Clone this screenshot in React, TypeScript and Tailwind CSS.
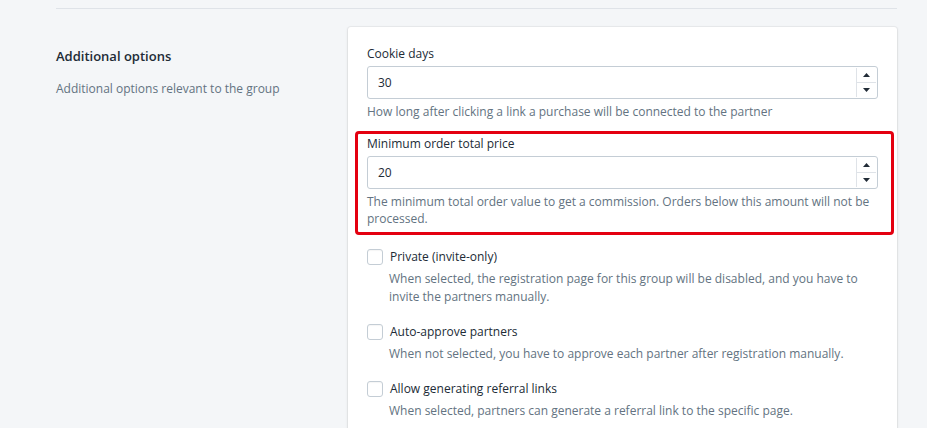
import React from "react";

function NumberField({ label, value, help }: { label: string; value: string; help: string }) {
  return (
    <div className="flex flex-col">
      <label className="text-[12px] leading-[18px] text-[#212b36] mb-[3px]">{label}</label>
      <div className="flex h-[33px] rounded-[3px] border border-[#c4cdd5] bg-white">
        <div className="flex-1 flex items-center pl-[10px] text-[12px] text-[#212b36]">{value}</div>
        <div className="w-[20px] flex flex-col border-l border-[#dfe3e8] my-[1px] mr-[1px]">
          <div className="flex-1 flex items-center justify-center border-b border-[#dfe3e8]">
            <svg width="7" height="4" viewBox="0 0 7 4"><path d="M3.5 0 L7 4 L0 4 Z" fill="#212b36" /></svg>
          </div>
          <div className="flex-1 flex items-center justify-center">
            <svg width="7" height="4" viewBox="0 0 7 4"><path d="M0 0 L7 0 L3.5 4 Z" fill="#212b36" /></svg>
          </div>
        </div>
      </div>
      <p className="text-[12px] leading-[17px] text-[#637381] mt-[4px]">{help}</p>
    </div>
  );
}

function CheckOption({ label, help }: { label: string; help: string }) {
  return (
    <div className="flex flex-col">
      <div className="flex items-center gap-[7px]">
        <span className="w-[16px] h-[16px] rounded-[3px] border border-[#c4cdd5] bg-white shadow-[inset_0_1px_1px_rgba(0,0,0,0.04)]" />
        <span className="text-[12px] leading-[18px] text-[#212b36]">{label}</span>
      </div>
      <p className="pl-[22px] text-[12px] leading-[18px] text-[#637381] mt-[4px]">{help}</p>
    </div>
  );
}

export default function App() {
  return (
    <div className="min-h-screen bg-[#f4f6f8] pl-[56px] pr-[30px] overflow-hidden" style={{ fontFamily: '"Open Sans", "Noto Sans", sans-serif' }}>
      <div className="pt-[8px] border-b border-[#dfe3e8]" />
      <div className="flex pt-[18px]">
        <div className="w-[292px] shrink-0 pt-[20px]">
          <h2 className="text-[13px] leading-[18px] font-semibold text-[#212b36]">Additional options</h2>
          <p className="text-[12px] leading-[18px] text-[#637381] mt-[15px]">Additional options relevant to the group</p>
        </div>
        <div className="flex-1 bg-white rounded-t-[3px] shadow-[0_0_0_1px_rgba(63,63,68,0.05),0_1px_3px_0_rgba(63,63,68,0.15)] px-[19px] pt-[18px] pb-[20px] flex flex-col">
          <NumberField
            label="Cookie days"
            value="30"
            help="How long after clicking a link a purchase will be connected to the partner"
          />
          <div className="mt-[11px] -ml-[12px] -mr-[16px] pl-[9px] pr-[13px] pt-[1px] pb-[5px] border-[3px] border-[#e40010] rounded-[4px]">
            <NumberField
              label="Minimum order total price"
              value="20"
              help="The minimum total order value to get a commission. Orders below this amount will not be processed."
            />
          </div>
          <div className="flex flex-col gap-[17px] mt-[13px]">
            <CheckOption
              label="Private (invite-only)"
              help="When selected, the registration page for this group will be disabled, and you have to invite the partners manually."
            />
            <CheckOption
              label="Auto-approve partners"
              help="When not selected, you have to approve each partner after registration manually."
            />
            <CheckOption
              label="Allow generating referral links"
              help="When selected, partners can generate a referral link to the specific page."
            />
          </div>
        </div>
      </div>
    </div>
  );
}
